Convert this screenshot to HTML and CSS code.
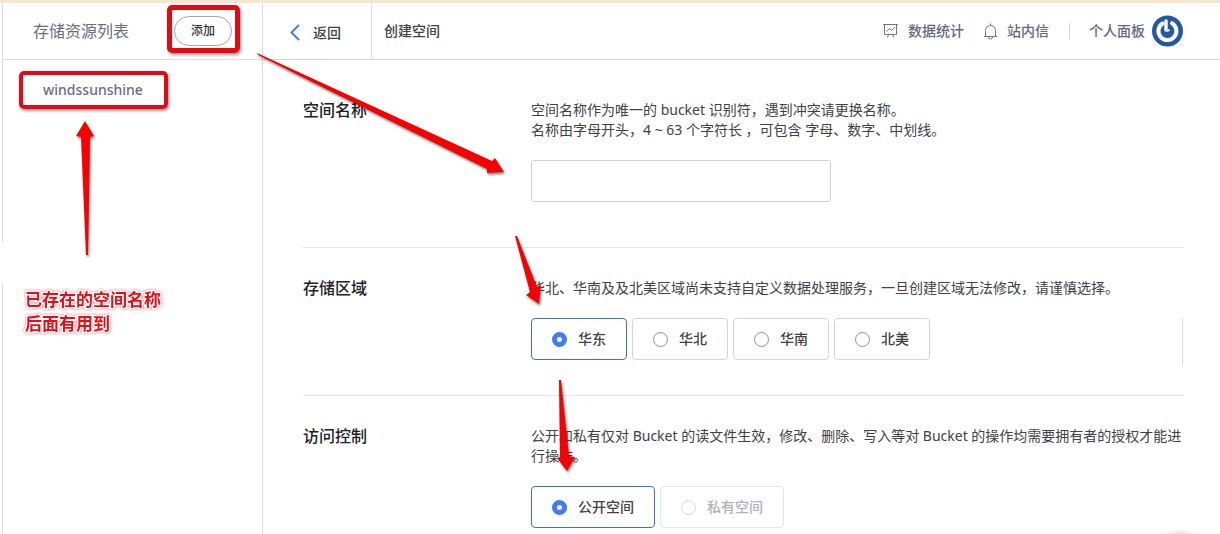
FILE: index.html
```html
<!DOCTYPE html>
<html lang="zh-CN">
<head>
<meta charset="utf-8">
<title>创建空间</title>
<link rel="stylesheet" href="styles.css">
</head>
<body>
<div class="app">
  <aside class="sidebar">
    <div class="sidebar-head">
      <h2 class="sidebar-title">存储资源列表</h2>
      <button class="add" type="button">添加</button>
    </div>
    <nav class="buckets"><a class="bucket" href="#">windssunshine</a></nav>
  </aside>
  <div class="page">
    <header class="topbar">
      <a class="back" href="#">
        <svg width="10" height="17" viewBox="0 0 10 17" fill="none" stroke="#4a7fd8" stroke-width="2"><path d="M9 1 1.5 8.5 9 16"/></svg>
        返回
      </a>
      <h1 class="page-title">创建空间</h1>
      <nav class="tools">
        <a class="tool" href="#">
          <svg width="15" height="16" viewBox="0 0 15 16" fill="none" stroke="#75758a"><path d="M0 1.5h15M1.500 1.500v10h12v-10M3.500 8.500l3-3 2 2 3.500-3.500M5.500 11.500l-1 3M9.500 11.500l1 3"/></svg>
          数据统计
        </a>
        <a class="tool" href="#">
          <svg width="13" height="17" viewBox="0 0 13 17" fill="none" stroke="#75758a"><path d="M0 13.500h13M1.500 13.500V7.500a5 5 0 0 1 10 0v6M6.500 2.500V.5M4.500 14a2 2 0 0 0 4 0"/></svg>
          站内信
        </a>
        <a class="tool profile" href="#">
          个人面板
          <svg width="31" height="32" viewBox="0 0 31 32" fill="none"><circle cx="15.500" cy="16" r="15.500" fill="#235a9f"/><path d="M10.500 8.500A9 9 0 1 0 20 8.300" stroke="#fff" stroke-width="4" stroke-linecap="round"/><path d="M14 6v9" stroke="#fff" stroke-width="3.400" stroke-linecap="round"/><path d="M13.700 14.500a2 2 0 0 0 3.600 0" stroke="#e4eefa" stroke-width="2"/></svg>
        </a>
      </nav>
    </header>
    <main class="form">
      <section class="row row-name">
        <label class="label" for="name">空间名称</label>
        <div class="field">
          <p class="hint">空间名称作为唯一的 bucket 识别符，遇到冲突请更换名称。<br>名称由字母开头，4 ~ 63 个字符长 ，可包含 字母、数字、中划线。</p>
          <input class="text" id="name" type="text">
        </div>
      </section>
      <section class="row row-region">
        <h3 class="label">存储区域</h3>
        <div class="field">
          <p class="hint">华北、华南及及北美区域尚未支持自定义数据处理服务，一旦创建区域无法修改，请谨慎选择。</p>
          <div class="options">
            <label class="option"><input type="radio" name="region" checked>华东</label>
            <label class="option"><input type="radio" name="region">华北</label>
            <label class="option"><input type="radio" name="region">华南</label>
            <label class="option"><input type="radio" name="region">北美</label>
          </div>
        </div>
      </section>
      <section class="row row-access">
        <h3 class="label">访问控制</h3>
        <div class="field">
          <p class="hint">公开和私有仅对 Bucket 的读文件生效，修改、删除、写入等对 Bucket 的操作均需要拥有者的授权才能进行操作。</p>
          <div class="options">
            <label class="option"><input type="radio" name="access" checked>公开空间</label>
            <label class="option"><input type="radio" name="access" disabled>私有空间</label>
          </div>
        </div>
      </section>
    </main>
  </div>
</div>
<div class="float-shadow"></div>
<div class="mark mark-add"></div>
<div class="mark mark-bucket"></div>
<svg class="arrows" width="620" height="534" viewBox="0 0 620 534" fill="#f70000">
  <path d="M257 53 258 55 487 169 487 173 504 172 495 158 492 161Z"/>
  <path d="M85 121 94 136 90 137 88 255H86L81 137 76 136Z"/>
  <path d="M515 236H517L537 287 541 285 539 304 526 295 530 292Z"/>
  <path d="M559 380H561L569 456 575 457 567 471 557 458 560 457Z"/>
</svg>
<p class="note">已存在的空间名称<br>后面有用到</p>
</body>
</html>
```
FILE: styles.css
```css
* { box-sizing: border-box; }
body {
  margin: 0;
  background: #fff;
  color: #404046;
  font: 14px/20px "Noto Sans", "Noto Sans CJK SC", sans-serif;
}
h1, h2, h3, p { margin: 0; font-size: inherit; }
a { color: inherit; text-decoration: none; }
button, input { font: inherit; color: inherit; margin: 0; }

.app {
  display: grid;
  grid-template-columns: 263px 1fr;
  min-height: 100vh;
  border-top: 3px solid #f7e6cf;
}
.sidebar {
  margin-left: 2px;
  border-right: 1px solid #dcdcdc;
  background: linear-gradient(#dcdcdc 239px, #fff 239px, #fff 280px, #dcdcdc 280px) left / 1px 100% no-repeat;
}
.sidebar-head {
  display: flex;
  align-items: center;
  gap: 45px;
  height: 57px;
  padding-left: 31px;
  border-bottom: 1px solid #dcdcdc;
}
.sidebar-title {
  font-size: 16px;
  font-weight: 400;
  color: #6c6c7e;
}
.add {
  width: 58px;
  height: 30px;
  padding: 0;
  border: 1px solid #aaa;
  border-radius: 15px;
  background: #fff;
  font-size: 12px;
  font-weight: 500;
  color: #333;
}
.buckets { padding: 20px 0 0 41px; }
.bucket { font-weight: 500; color: #6c6c80; }

.topbar {
  display: flex;
  align-items: center;
  height: 57px;
  padding-right: 37px;
  border-bottom: 1px solid #d4d4d4;
}
.back {
  display: flex;
  align-items: center;
  align-self: stretch;
  gap: 13px;
  width: 109px;
  padding: 3px 0 0 27px;
  border-right: 1px solid #dcdcdc;
  font-weight: 500;
}
.page-title { padding-left: 12px; font-weight: 500; }
.tools {
  display: flex;
  align-items: center;
  gap: 20px;
  margin-left: auto;
  font-weight: 500;
  color: #666680;
}
.tool { display: flex; align-items: center; gap: 10px; }
.profile {
  gap: 7px;
  padding-left: 20px;
  background: linear-gradient(#d4d4dc, #d4d4dc) left / 1px 16px no-repeat;
}

.form { padding: 10px 36px 0 40px; }
.row {
  display: grid;
  grid-template-columns: 228px 1fr;
  padding: 30px 0 35px;
}
.row + .row { border-top: 1px solid #e4e4e4; }
.row-name { padding-bottom: 45px; }
.label { font-size: 16px; font-weight: 500; color: #202028; }
.hint { margin-bottom: 20px; }
.text {
  display: block;
  width: 300px;
  height: 42px;
  padding: 0 12px;
  border: 1px solid #d0d0d0;
  border-radius: 3px;
  background: #fff;
}
.options { display: flex; align-items: flex-start; gap: 5px; }
.row-region { padding-bottom: 29px; }
.row-region .options {
  height: 48px;
  margin-right: 1px;
  border-right: 1px solid #dcdcdc;
}
.row-access { padding-bottom: 0; }
.option {
  display: flex;
  align-items: center;
  gap: 11px;
  height: 42px;
  padding: 0 20px;
  border: 1px solid #d4d4d4;
  border-radius: 4px;
  font-weight: 500;
}
.option:has(:checked) { border-color: #3f6fd9; }
.option:has(:disabled) { border-color: #e4e4e8; color: #b0b0bc; }
.option input {
  appearance: none;
  width: 15px;
  height: 15px;
  border: 1px solid #909090;
  border-radius: 50%;
}
.option input:checked { border: 5px solid #3f7cf5; }
.option input:disabled { border-color: #d8d8dc; }

.float-shadow {
  position: fixed;
  right: 20px;
  bottom: 0;
  width: 40px;
  height: 5px;
  background: radial-gradient(ellipse at bottom, #e0e0e0, #fff 70%);
}
.mark {
  position: absolute;
  border: 5px solid #e50914;
  border-radius: 5px;
  box-shadow: 1px 2px 3px #0006;
}
.mark-add { left: 167px; top: 5px; width: 73px; height: 48px; }
.mark-bucket { left: 19px; top: 71px; width: 149px; height: 38px; border-width: 4px; }
.arrows {
  position: absolute;
  left: 0;
  top: 0;
  pointer-events: none;
  filter: drop-shadow(1px 2px 1px #0007);
}
.note {
  position: absolute;
  left: 25px;
  top: 288px;
  font-size: 17px;
  line-height: 24px;
  font-weight: 700;
  color: #e80c16;
  -webkit-text-stroke: 3px #fff;
  paint-order: stroke fill;
  filter: drop-shadow(0 0 1px #e80c16aa);
}
```
